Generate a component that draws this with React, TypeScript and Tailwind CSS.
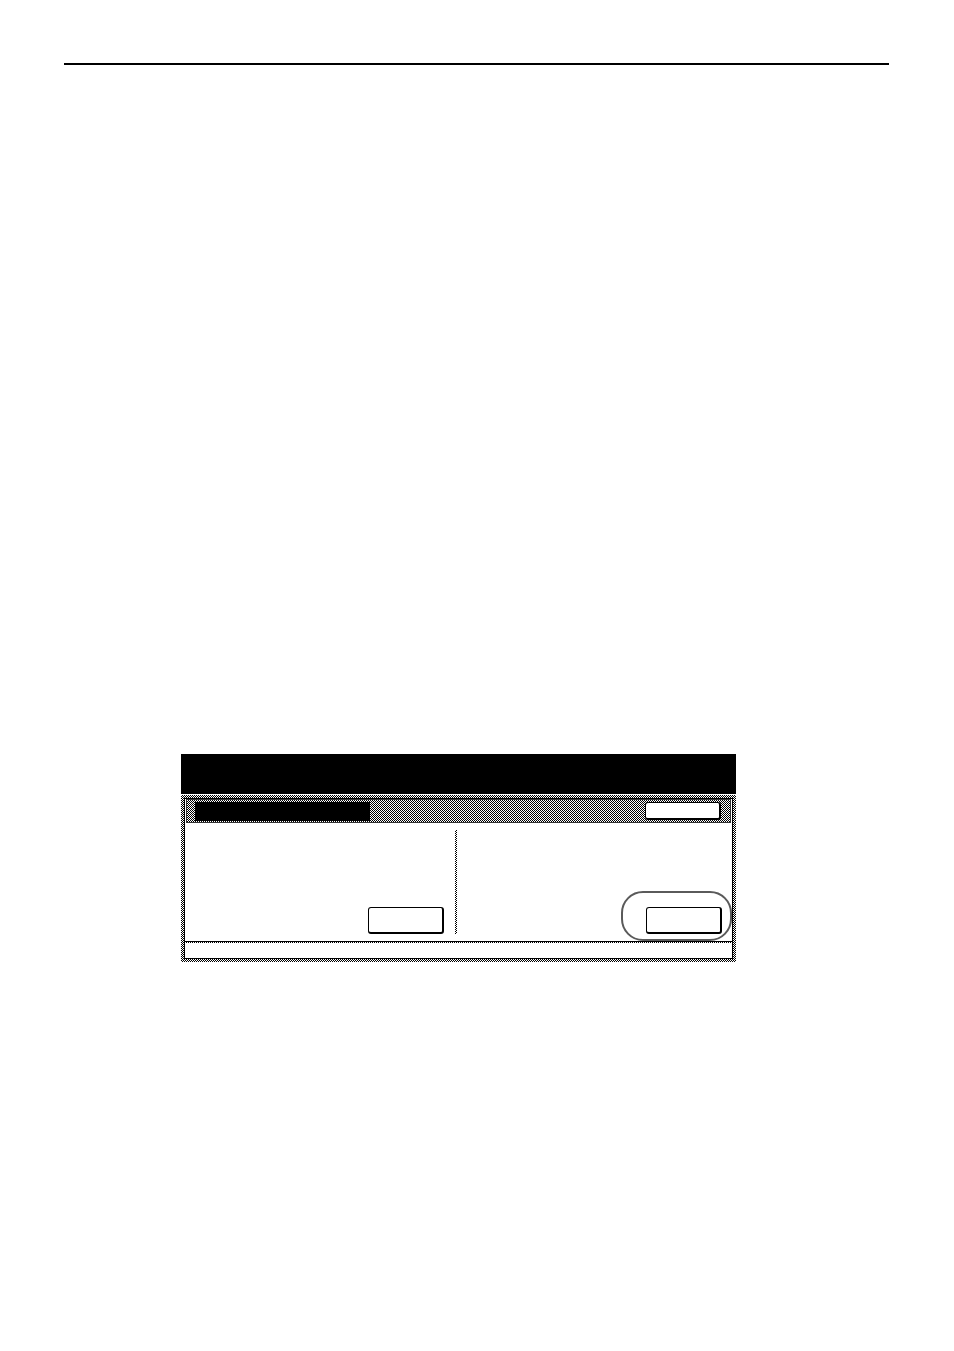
const dither =
  "[background-image:repeating-conic-gradient(#000_0%_25%,#fff_0%_50%)] [background-size:2px_2px]";

function PanelButton() {
  return (
    <div className="h-[27px] w-[76px] rounded-[3px] border border-r-2 border-b-2 border-black bg-white" />
  );
}

export default function App() {
  return (
    <div className="min-h-[1351px] w-[954px] bg-white pt-[63px] pl-[64px] pr-[65px] font-['Liberation_Sans',sans-serif]">
      <div className="h-[2px] bg-black" />

      <div className="ml-[117px] mt-[689px] w-[555px]">
        {/* screen header */}
        <div className="h-[40px] bg-black" />

        {/* outer panel */}
        <div className={`mt-px p-[3px] ${dither}`}>
          <div className="border border-black bg-white">
            {/* title strip */}
            <div className={`mx-px flex h-[24px] items-center justify-between border border-[#333] pl-[8px] pr-[9px] ${dither}`}>
              <div className="h-[19px] w-[175px] bg-black" />
              <div className="h-[18px] w-[76px] rounded-[3px] border border-r-2 border-b-2 border-black bg-white" />
            </div>

            {/* body */}
            <div className="flex h-[115px]">
              <div className="flex w-[270px] items-end justify-end pr-[11px] pb-[4px]">
                <PanelButton />
              </div>
              <div className={`mt-[7px] mb-[4px] w-[2px] ${dither}`} />
              <div className="relative flex flex-1 items-end justify-end pr-[10px] pb-[4px]">
                <PanelButton />
                <div className="absolute right-0 bottom-[-3px] h-[50px] w-[111px] rounded-[22px] border-2 border-[#5a5a5a]" />
              </div>
            </div>

            {/* status line */}
            <div className="mt-[3px] h-px bg-black" />
            <div className={`h-px ${dither}`} />
            <div className="h-[15px]" />
          </div>
        </div>
      </div>
    </div>
  );
}
